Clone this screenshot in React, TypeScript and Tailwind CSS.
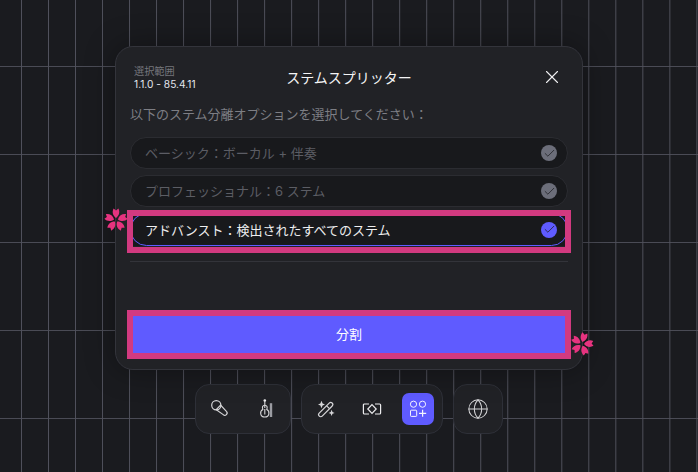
import { Check, X, Globe } from "lucide-react";

const JP = "font-['Inter','Noto_Sans_CJK_JP',sans-serif]";

function Flower({ className }: { className: string }) {
  return (
    <svg viewBox="0 0 24 24" className={className} fill="#e6337f">
      {[0, 72, 144, 216, 288].map((a) => (
        <path
          key={a}
          transform={`rotate(${a} 12 12)`}
          d="M12 10 C8.6 7.6 7.9 3.8 9.6 .6 L12 2.4 L14.4 .6 C16.1 3.8 15.4 7.6 12 10 Z"
        />
      ))}
    </svg>
  );
}

function Option({ label, active }: { label: string; active?: boolean }) {
  return (
    <div
      className={`flex items-center justify-between rounded-full border bg-[#18191c] pl-[14px] pr-[10px] text-[13px] ${
        active ? "h-[33px] border-[#5f5bff] text-[#eeeeef]" : "h-[32px] border-[#2b2c31] text-[#5c5d64]"
      }`}
    >
      <span className="pt-[2px]">{label}</span>
      <span
        className={`flex h-4 w-4 items-center justify-center rounded-full ${
          active ? "bg-[#5f5bff]" : "bg-[#6c6e7a]"
        }`}
      >
        <Check size={13} strokeWidth={1.4} className="text-[#1b1c20]" />
      </span>
    </div>
  );
}

function MicIcon() {
  return (
    <svg width="20" height="20" viewBox="0 0 20 20" fill="none" stroke="#d6d6d8" strokeWidth="1.2">
      <circle cx="7.3" cy="6.3" r="4.6" />
      <path d="M7.2 10.7 L11.6 6.2 L17.4 12.4 a2.2 2.2 0 0 1 -3.2 3.2 Z" />
    </svg>
  );
}

function ViolinIcon() {
  return (
    <svg width="20" height="20" viewBox="0 0 20 20" fill="none" stroke="#d6d6d8" strokeWidth="1.1">
      <circle cx="8.8" cy="1.6" r="1.3" fill="#eeeeef" stroke="none" />
      <path d="M8.8 2.5 V9" />
      <path d="M8.8 6.2 C6.4 6.2 6 8.4 6.8 10.4 C3.6 12 3.8 18 8.8 18 C13.8 18 14 12 10.8 10.4 C11.6 8.4 11.2 6.2 8.8 6.2 Z" />
      <path d="M8.8 10 V15.5" />
      <path d="M15 4.2 V18" stroke="#9b9ca2" strokeWidth="2.4" />
    </svg>
  );
}

function WandIcon() {
  return (
    <svg width="20" height="20" viewBox="0 0 20 20" fill="none" stroke="#d6d6d8" strokeWidth="1.2">
      <path d="M3.2 14.2 L13.2 4.1 a2 2 0 0 1 3 2.9 L6.2 17.1 a2 2 0 0 1 -3 -2.9 Z" />
      <path d="M10.6 6.8 L13.5 9.7" />
      <path d="M5.5 1.8 L6.6 4.4 L9 5.5 L6.6 6.6 L5.5 9.2 L4.4 6.6 L2 5.5 L4.4 4.4 Z" fill="#d6d6d8" stroke="none" />
      <path d="M15.6 10.8 L16.5 13 L18.6 13.9 L16.5 14.8 L15.6 17 L14.7 14.8 L12.6 13.9 L14.7 13 Z" fill="#d6d6d8" stroke="none" />
    </svg>
  );
}

function SwapIcon() {
  return (
    <svg width="20" height="20" viewBox="0 0 20 20" fill="none" stroke="#ececee" strokeWidth="1.2">
      <path d="M7 5 H2.4 a1 1 0 0 0 -1 1 V14 a1 1 0 0 0 1 1 H7" />
      <path d="M13 5 H17.6 a1 1 0 0 1 1 1 V14 a1 1 0 0 1 -1 1 H13" />
      <path d="M10 5.6 L14.2 10 L10 14.4 L5.8 10 Z" />
    </svg>
  );
}

function AddonIcon() {
  return (
    <svg width="20" height="20" viewBox="0 0 20 20" fill="none" stroke="#f4f4ff" strokeWidth="1">
      <circle cx="5.5" cy="5.2" r="3.1" />
      <circle cx="14.5" cy="5.2" r="3.1" />
      <rect x="2.5" y="11.2" width="6.2" height="6.2" rx="0.8" />
      <path d="M14.6 10.8 V17.8 M11 14.3 H18.2" strokeWidth="1.2" />
    </svg>
  );
}

export default function App() {
  return (
    <div
      className={`${JP} flex h-[472px] w-[698px] flex-col items-center overflow-hidden bg-[#1a1b1f] bg-[linear-gradient(to_right,#50515c_1px,transparent_1px),linear-gradient(to_bottom,#4a4b55_1px,transparent_1px)] bg-[size:27.03px_88px] bg-[position:21px_66px] pt-[46px]`}
    >
      <div className="relative flex h-[324px] w-[468px] flex-col rounded-[18px] border border-[#33343b] bg-[#212226] px-[14px] shadow-[0_0_30px_rgba(0,0,0,0.35)]">
        <div className="relative mt-[17px] flex h-[26px] items-center justify-center">
          <div className="absolute left-[4px] top-[1px] text-[10.2px] leading-[13px]">
            <div className="text-[#75767c]">選択範囲</div>
            <div className="text-[#e4e6ee]">1.1.0 - 85.4.11</div>
          </div>
          <div className="text-[14px] text-[#f4f4f5]">ステムスプリッター</div>
          <X size={22} strokeWidth={1.2} className="absolute right-[5px] top-[2px] text-[#f0f0f2]" />
        </div>

        <p className="mt-[15px] text-[13px] leading-[19px] text-[#7d7e84]">
          以下のステム分離オプションを選択してください：
        </p>

        <div className="mt-[13px] flex flex-col gap-[6px]">
          <Option label="ベーシック：ボーカル + 伴奏" />
          <Option label="プロフェッショナル：6 ステム" />
          <div className="relative bg-[#18191c]">
            <Option label="アドバンスト：検出されたすべてのステム" active />
            <div className="absolute -left-[3px] -right-[3px] -top-[3px] -bottom-[7px] border-[6px] border-[#d23a80]" />
            <Flower className="absolute -left-[26px] -top-[5px] h-[24px] w-[24px]" />
          </div>
        </div>

        <div className="mt-[15px] h-px bg-[#33343a]" />

        <div className="relative mt-[48px]">
          <button className="-mx-[3px] flex h-[49px] w-[444px] items-center justify-center border-[6px] border-[#d23a80] bg-[#5f5bff] text-[13px] text-white">
            分割
          </button>
          <Flower className="absolute -right-[26px] top-[22px] h-[24px] w-[24px] rotate-[15deg]" />
        </div>
      </div>

      <div className="mt-[14px] flex gap-[10px]">
        <div className="flex h-[50px] w-[96px] items-center gap-[27px] rounded-[14px] border border-[#2e3038] bg-[#212226] pl-[13px]">
          <MicIcon />
          <ViolinIcon />
        </div>
        <div className="flex h-[50px] w-[142px] items-center rounded-[14px] border border-[#2e3038] bg-[#212226] pl-[14px]">
          <WandIcon />
          <span className="ml-[26px]">
            <SwapIcon />
          </span>
          <span className="ml-[20px] flex h-[32px] w-[32px] items-center justify-center rounded-[7px] bg-[#5f5bff]">
            <AddonIcon />
          </span>
        </div>
        <div className="flex h-[50px] w-[50px] items-center justify-center rounded-[14px] border border-[#2e3038] bg-[#212226]">
          <Globe size={22} strokeWidth={1.1} className="text-[#d6d6d8]" />
        </div>
      </div>
    </div>
  );
}
